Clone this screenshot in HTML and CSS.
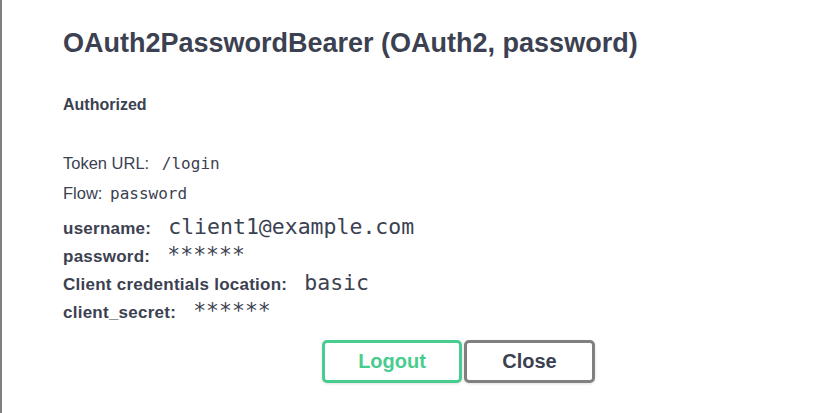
FILE: index.html
```html
<!DOCTYPE html>
<html lang="en">
<head>
<meta charset="utf-8">
<title>Available authorizations</title>
<link rel="stylesheet" href="styles.css">
</head>
<body>
<div class="backdrop-edge"></div>
<main class="auth">
  <h2 class="auth-title">OAuth2PasswordBearer (OAuth2, password)</h2>
  <h4 class="auth-state">Authorized</h4>
  <p class="meta meta-first">Token URL:<code class="code-sm"> /login</code></p>
  <p class="meta">Flow: <code class="code-sm">password</code></p>
  <div class="field"><label class="field-label">username:</label><code class="code-lg">client1@example.com</code></div>
  <div class="field"><label class="field-label">password:</label><code class="code-lg">******</code></div>
  <div class="field"><label class="field-label">Client credentials location:</label><code class="code-lg">basic</code></div>
  <div class="field"><label class="field-label">client_secret:</label><code class="code-lg">******</code></div>
  <div class="btn-row">
    <button class="btn btn-logout" type="button">Logout</button>
    <button class="btn btn-close" type="button">Close</button>
  </div>
</main>
</body>
</html>
```
FILE: styles.css
```css
html, body {
  margin: 0;
  padding: 0;
  background: #ffffff;
  height: 100%;
  overflow: hidden;
}

body {
  display: flex;
  font-family: "Liberation Sans", Arial, sans-serif;
  color: #3b4151;
}

.backdrop-edge {
  width: 2px;
  flex: 0 0 2px;
  background: #7f7f7f;
}

.auth {
  flex: 1;
  padding: 27px 0 0 61px;
}

.auth-title {
  margin: 0;
  font-size: 27px;
  line-height: 32px;
  font-weight: 700;
}

.auth-state {
  margin: 36px 0 0;
  font-size: 16px;
  line-height: 20px;
  font-weight: 700;
}

.meta {
  margin: 0;
  height: 30px;
  line-height: 30px;
  font-size: 16.5px;
  white-space: pre;
}

.meta-first {
  margin-top: 33px;
}

.code-sm {
  font-family: "DejaVu Sans Mono", monospace;
  font-size: 16px;
  line-height: 30px;
  padding-left: 3px;
}

.field {
  height: 28px;
  line-height: 28px;
  white-space: nowrap;
}

.meta + .field {
  margin-top: 5px;
}

.field-label {
  font-size: 17px;
  font-weight: 700;
  letter-spacing: 0.25px;
}

.code-lg {
  font-family: "DejaVu Sans Mono", monospace;
  font-size: 21.5px;
  line-height: 28px;
  margin-left: 17px;
}

.btn-row {
  display: flex;
  gap: 2px;
  margin-top: 15px;
  padding-left: 259px;
}

.btn {
  height: 43px;
  border-radius: 5px;
  border: 3px solid #808080;
  background: #ffffff;
  font-family: "Liberation Sans", Arial, sans-serif;
  font-size: 20px;
  font-weight: 700;
  box-shadow: 0 1px 3px rgba(0, 0, 0, 0.12);
  cursor: pointer;
}

.btn-logout {
  width: 140px;
  border-color: #49cc90;
  color: #49cc90;
}

.btn-close {
  width: 131px;
  color: #3b4151;
}
```
